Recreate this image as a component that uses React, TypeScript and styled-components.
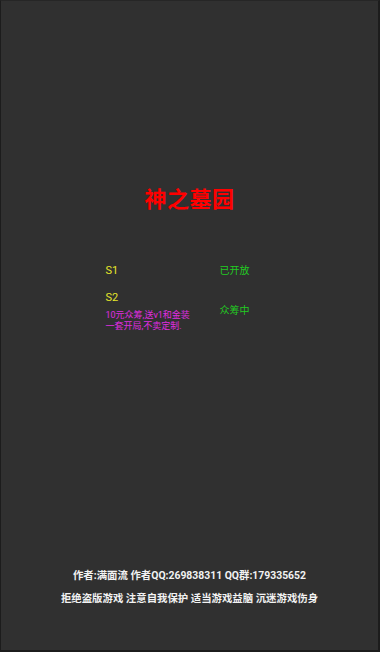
import React from "react";
import styled, { createGlobalStyle } from "styled-components";

const Global = createGlobalStyle`
  html, body { margin: 0; padding: 0; background: #303030; }
  #root { height: 100vh; }
  * { box-sizing: border-box; }
`;

const Screen = styled.div`
  height: 100vh;
  display: flex;
  flex-direction: column;
  align-items: center;
  background: #303030;
  border-left: 1px solid #1c1c1c;
  border-right: 2px solid #1c1c1c;
  border-bottom: 2px solid #1c1c1c;
  border-top: 1px solid #262626;
  font-family: Roboto, "Noto Sans CJK SC", sans-serif;
`;

const Title = styled.h1`
  margin: 183px 0 0;
  font-size: 22px;
  line-height: 32px;
  font-weight: 700;
  color: #ff0000;
  letter-spacing: 0.5px;
`;

const ServerList = styled.div`
  margin-top: 47px;
  width: 168px;
  display: flex;
  flex-direction: column;
  gap: 11px;
`;

const Row = styled.div`
  display: grid;
  grid-template-columns: 114px 1fr;
  align-items: center;
`;

const Info = styled.div`
  display: flex;
  flex-direction: column;
`;

const Name = styled.div`
  font-size: 11px;
  line-height: 16px;
  color: #e6e62a;
`;

const Desc = styled.div`
  margin-top: 4px;
  font-size: 9px;
  line-height: 11px;
  color: #e02ce0;
  white-space: pre-line;
`;

const Status = styled.div`
  font-size: 10px;
  line-height: 16px;
  color: #22cc22;
`;

const Spacer = styled.div`
  flex: 1;
`;

const FooterLine = styled.div`
  font-size: 10.4px;
  line-height: 23px;
  font-weight: 700;
  color: #f2f2f2;
  text-align: center;
  white-space: nowrap;
`;

const Footer = styled.div`
  display: flex;
  flex-direction: column;
  align-items: center;
  padding-bottom: 40px;
`;

const servers = [
  { name: "S1", status: "已开放" },
  { name: "S2", status: "众筹中", desc: "10元众筹,送v1和金装\n一套开局,不卖定制." },
];

export default function App() {
  return (
    <>
      <Global />
      <Screen>
        <Title>神之墓园</Title>
        <ServerList>
          {servers.map((s) => (
            <Row key={s.name}>
              <Info>
                <Name>{s.name}</Name>
                {s.desc && <Desc>{s.desc}</Desc>}
              </Info>
              <Status>{s.status}</Status>
            </Row>
          ))}
        </ServerList>
        <Spacer />
        <Footer>
          <FooterLine>作者:满面流 作者QQ:269838311 QQ群:179335652</FooterLine>
          <FooterLine>拒绝盗版游戏 注意自我保护 适当游戏益脑 沉迷游戏伤身</FooterLine>
        </Footer>
      </Screen>
    </>
  );
}
